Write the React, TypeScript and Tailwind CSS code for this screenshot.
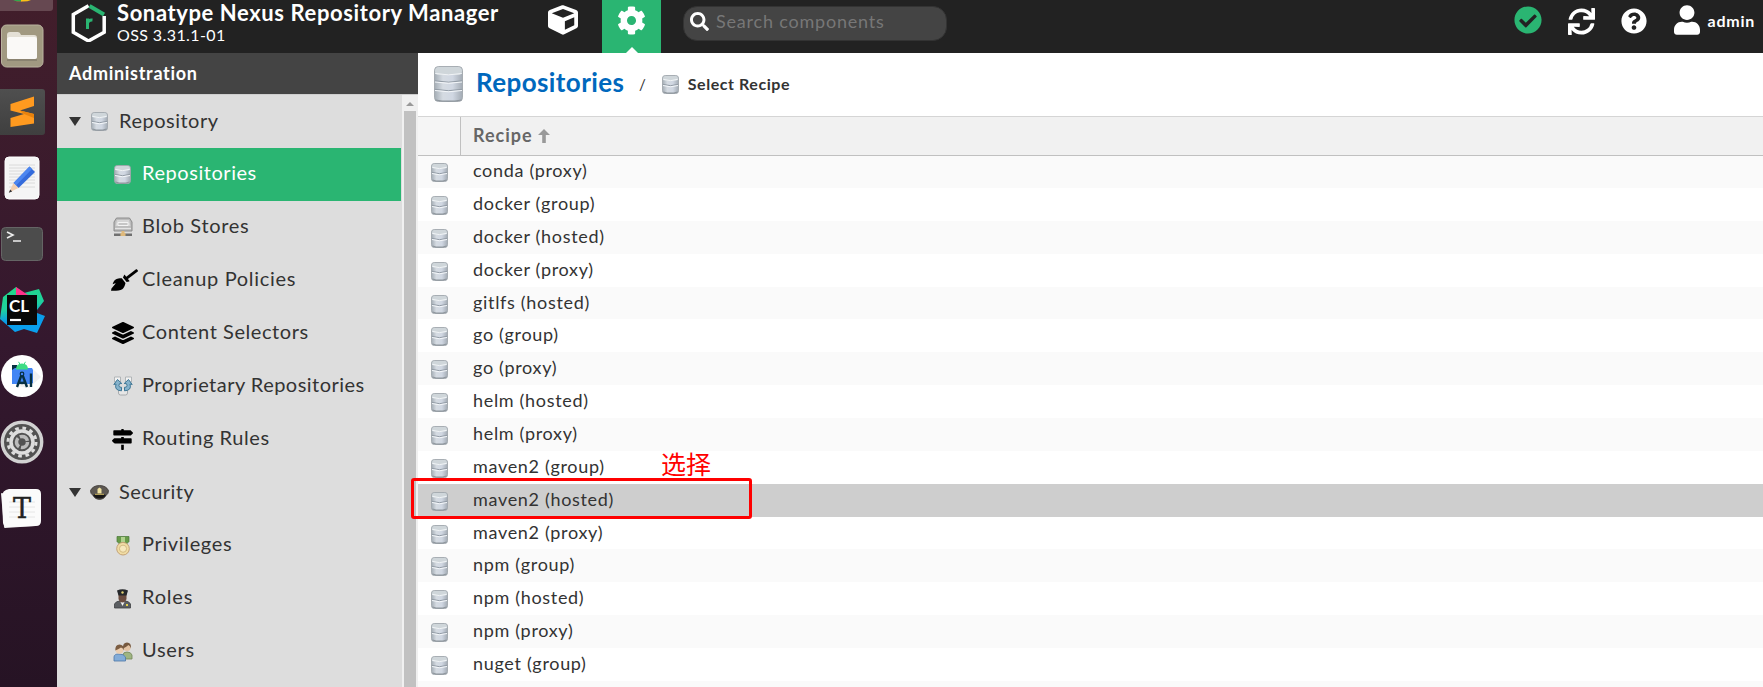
import React, { useId } from "react";
import { FaBroom, FaCheckCircle, FaCog, FaCube, FaLayerGroup, FaMapSigns, FaQuestionCircle, FaSearch, FaSync, FaUser } from "react-icons/fa";

function Database({ className, tiers = 2 }: { className: string; tiers?: number }) {
  const id = useId();
  const big = tiers === 3;
  const h = big ? 36 : 19;
  const w = big ? 29 : 17;
  const lines = big ? [16, 24.5] : [10.5];
  const r = big ? 4 : 2.8;
  const lid = big ? 4 : 2.4;
  return (
    <svg className={`shrink-0 ${className}`} viewBox={`0 0 ${w} ${h}`}>
      <defs>
        <linearGradient id={id} x1="0" x2="1">
          <stop offset="0" stopColor="#a4adb5" />
          <stop offset="0.3" stopColor="#d5dbe2" />
          <stop offset="0.65" stopColor="#d0d7e2" />
          <stop offset="1" stopColor="#a3abb4" />
        </linearGradient>
      </defs>
      <rect x=".5" y=".5" width={w - 1} height={h - 1} rx={r} fill={`url(#${id})`} stroke="#a0a7ad" strokeWidth=".9" />
      <path d={`M1.500 ${h - 2}Q${w / 2} ${h + 0.4} ${w - 1.5} ${h - 2}`} fill="none" stroke="#8d959c" strokeWidth="1.2" />
      <rect x="1" y="1" width={w - 2} height={lid * 2} rx={lid} fill="#cfd6da" />
      <path d={`M1.200 ${lid * 2 - 0.5}Q${w / 2} ${lid * 2 + 2.2} ${w - 1.2} ${lid * 2 - 0.5}`} fill="none" stroke="#f1f4f7" strokeWidth="1" />
      {lines.map((y) => (
        <g key={y} fill="none">
          <path d={`M.8 ${y - 1.2}Q${w / 2} ${y + 1.6} ${w - 0.8} ${y - 1.2}`} stroke="#939ca6" strokeWidth="1" />
          <path d={`M1 ${y}Q${w / 2} ${y + 2.6} ${w - 1} ${y}`} stroke="#f4f7fa" strokeWidth="1" />
        </g>
      ))}
    </svg>
  );
}

const rows = [
  "conda (proxy)", "docker (group)", "docker (hosted)", "docker (proxy)", "gitlfs (hosted)", "go (group)",
  "go (proxy)", "helm (hosted)", "helm (proxy)", "maven2 (group)", "maven2 (hosted)", "maven2 (proxy)",
  "npm (group)", "npm (hosted)", "npm (proxy)", "nuget (group)", "",
];

function Blob() {
  return (
    <svg className="h-5 w-5" viewBox="0 0 20 20">
      <path d="M3.500 1h13L19 5v9H1V5z" fill="#bcbcbc" stroke="#858585" strokeWidth=".9" />
      <path d="M4 3h12l1.500 6h-15z" fill="#d6d6d6" />
      <path d="M5 5.500h10v3H5z" fill="#c6c6c6" stroke="#f7f7f7" strokeWidth=".9" />
      <path d="M2 11.500h16" stroke="#e4e4e4" strokeWidth="1.200" />
      <path d="M1 16.500h18v2.500H1z" fill="#707070" />
      <path d="M8.500 14h3v2h1v3h-5v-3h1z" fill="#dfb97b" />
    </svg>
  );
}
function Proprietary() {
  return (
    <svg className="h-5 w-5" viewBox="0 0 20 20">
      <path d="M1.500 1h6v5h-6zM12.500 1h6v5h-6z" fill="#f2f2f2" stroke="#a5a9ac" strokeWidth=".8" />
      <path d="M5.500 13v4q0 2 2 2h5q2 0 2-2v-4" fill="#e6e6e6" stroke="#a0a5a8" strokeWidth=".9" />
      <path d="M8.500 14.800Q1 14.500 3 8L.8 8.500 4.500 3.500l4.300 4-2.300.2Q4.700 11.300 8.500 11.300zM11.500 14.800Q19 14.500 17 8l2.200.5L15.500 3.500l-4.300 4 2.300.2Q15.300 11.300 11.500 11.300z" fill="#86b3cc" stroke="#3f7796" strokeWidth="1" />
    </svg>
  );
}
function Cap() {
  return (
    <svg className="h-[15px] w-[19px]" viewBox="0 0 19 15">
      <path d="M.5 5.500Q3 .5 9.500.5T18.500 5.500q.3 3-2.500 5-2 4-6.500 4T3 10.500Q.2 8.500 .5 5.500z" fill="#5d5852" stroke="#3b3733" strokeWidth=".8" />
      <path d="M3 10q6-3 13 0-2 3.500-6.500 3.500T3 10z" fill="#181716" />
      <path d="M9.500 2.500l2 1.500v4.500H7.500V4z" fill="#f0e2a0" /><path d="M5 9.300h9" stroke="#d4bd68" />
    </svg>
  );
}
function Medal() {
  return (
    <svg className="h-5 w-5" viewBox="0 0 20 20">
      <path d="M4 .5h12v5l-3 3H7l-3-3z" fill="#679b48" stroke="#477637" strokeWidth=".7" /><path d="M8 1h4v5H8z" fill="#b0d18e" />
      <circle cx="10" cy="12.700" r="6.300" fill="#f0dca4" stroke="#c4a378" /><circle cx="10" cy="12.700" r="3.600" fill="#f6e8bd" stroke="#d3bb83" />
    </svg>
  );
}
function Officer() {
  return (
    <svg className="h-5 w-5" viewBox="0 0 20 20">
      <path d="M1.500 19v-4Q3 12 7 12h5q4 0 5.500 3v4z" fill="#5b5e62" stroke="#3e4043" strokeWidth=".8" /><path d="M7 12h5l-2.500 5z" fill="#f4f4f4" />
      <path d="M5.500 5h8v5q-1 3.500-4 3.500t-4-3.500z" fill="#6b4c3f" /><path d="M4 1.500Q9.500-1 15 1.500l-1.500 5h-8z" fill="#26282b" />
      <circle cx="9.500" cy="3.500" r="1.200" fill="#e0cd71" /><path d="M13 15h2v2h-2z" fill="#e4d04e" />
    </svg>
  );
}
function People() {
  return (
    <svg className="h-5 w-5" viewBox="0 0 20 20">
      <path d="M10 17v-4q0-3 4-3t5 3v4z" fill="#9fb582" stroke="#728759" strokeWidth=".8" /><circle cx="14" cy="5.500" r="3.600" fill="#e3c3a3" /><path d="M10 6.500Q9.500.5 14 .5t4 6Q17.500 4 15.500 3 13 5 10 6.500z" fill="#76593f" />
      <path d="M1 19v-4q0-3 5-3t6.500 3v4z" fill="#83acd8" stroke="#4d77a7" strokeWidth=".8" /><circle cx="6.500" cy="8" r="3.800" fill="#ecceb0" /><path d="M2.300 8.500Q2 2.500 6.500 2.500T11 8.500Q10 6 8 5.500 5 7.500 2.300 8.500z" fill="#7c5d42" />
    </svg>
  );
}

function Group({ icon, label, space }: { icon: React.ReactNode; label: string; space: string }) {
  return (
    <div className="flex h-[53.07px] shrink-0 items-center pb-px pl-3">
      <svg className="h-[9px] w-3" viewBox="0 0 12 9"><path d="M0 0h12L6 9z" fill="#333" /></svg>
      <span className="ml-[6px] flex w-6 justify-center">{icon}</span>
      <span className={`mb-[3px] ml-[8px] whitespace-nowrap ${space}`}>{label}</span>
    </div>
  );
}
function Item({ icon, label, active, space }: { icon: React.ReactNode; label: string; active?: boolean; space: string }) {
  return (
    <div className={`flex h-[53.07px] w-[344px] shrink-0 items-center pb-px pl-[52px] ${active ? "bg-[#2ab572] text-white" : ""}`}>
      <span className="flex w-[27px] justify-center text-black">{icon}</span>
      <span className={`mb-[5px] ml-[6px] whitespace-nowrap ${space}`}>{label}</span>
    </div>
  );
}

function Dock() {
  return (
    <aside className="relative h-full w-[57px] shrink-0 overflow-hidden bg-linear-to-b from-[#421e2b] via-[#34182e] to-[#261324]">
      <svg className="h-[687px] w-[57px]" viewBox="0 0 57 687">
        <defs>
          <linearGradient id="cl" x1="0" y1="0" x2="0.2" y2="1"><stop offset=".1" stopColor="#21d789" /><stop offset=".5" stopColor="#1fd0a0" /><stop offset=".75" stopColor="#0a9be8" /><stop offset="1" stopColor="#0aa0ee" /></linearGradient>
          <linearGradient id="st" x1="0" y1="0" x2="0" y2="1"><stop offset="0" stopColor="#4f4f4f" /><stop offset="1" stopColor="#3f3f3f" /></linearGradient>
        </defs>
        <rect x="-5" y="-10" width="58" height="21" rx="3" fill="#664851" />
        <path d="M14 0h8v1.500h-5z" fill="#e04436" /><path d="M13 0h9l-1 1.600q-5 0-8-1.600z" fill="#2fa84f" /><path d="M21 0h10q-4 2-10 1.500z" fill="#fbc116" />
        <rect x="1.500" y="25" width="41.500" height="42" rx="5" fill="#a19981" stroke="#bab39f" />
        <path d="M7 60h30" stroke="#8a8370" strokeWidth="2" />
        <path d="M7 35q0-3 3-3h8q2 0 3 3h13q3 0 3 3v18q0 3-3 3H10q-3 0-3-3z" fill="#e4e0d6" /><rect x="7" y="37" width="30" height="22" rx="2.500" fill="#faf9f7" />
        <rect x="-3" y="89" width="48" height="46" rx="3" fill="url(#st)" />
        <path d="M10.500 104L34 96.500v9.500l-14 4.500 14 3.500v9.500L10.500 127v-9l13.500-4-13.500-3.500z" fill="#ff9a1f" />
        <path d="M20 110.500l14 3.500v4l-10-4z" fill="#e8820c" />
        <rect x="5" y="157" width="34" height="42" rx="4" fill="#f5f5f5" stroke="#fff" />
        <path d="M9 165h26M9 168h26M9 171h26M9 174h26M9 177h26M9 180h26M9 183h26M9 187h26" stroke="#d3d3d3" strokeWidth=".8" />
        <path d="M29.500 166.500l5.500 5.500-16.500 16-5-5z" fill="#346bdb" /><path d="M29.500 166.500l2.500 2.500-16 16.500-2.500-2.500z" fill="#4c86f0" /><path d="M13.500 183l5 5-9.500 4.500z" fill="#f1ceb0" /><path d="M10.200 189.500l2 2-3.400 1.300z" fill="#333" />
        <rect x="1.500" y="227.500" width="41" height="33" rx="4" fill="#4c4c4c" stroke="#656565" /><path d="M7 232l6 3-6 3M13 241h8" fill="none" stroke="#eee" strokeWidth="1.600" />
        <path d="M3 297l13-10 8 6 15-4 5 12-7 9v3l8 3-8 17-13-4-9 3-15-13z" fill="url(#cl)" /><path d="M16 287l12 8H16z" fill="#ff318c" /><path d="M24 293l-8-2v4h10z" fill="#ff318c" />
        <rect x="7" y="295" width="30" height="30" fill="#080808" /><path d="M10 320h11" stroke="#fff" strokeWidth="2.200" />
        <text x="9" y="311.500" fill="white" fontSize="17" fontWeight="bold" fontFamily="Lato, sans-serif">CL</text>
        <circle cx="22" cy="376" r="21" fill="#fff" /><path d="M33 369l8 8-12 11-12-2z" fill="#f1f1f1" /><path d="M12 365h5v5h-5z" fill="#073042" /><path d="M12 370l3-2h17l1 2v13l-2 1H12z" fill="#4285f4" /><path d="M16 369.500q0-6 6-6t6 6z" fill="#3ddc84" /><path d="M18.500 361.800l1.500 2.500M25.500 361.800L24 364.300" stroke="#3ddc84" />
        <path d="M21.500 375l-4.500 12M22.500 375l4.500 12M18.500 382q3.500 2 7 0M31 373.500v13.500" fill="none" stroke="#073042" strokeWidth="2.400" /><circle cx="22" cy="374" r="1.800" fill="#4285f4" stroke="#073042" strokeWidth="1.200" />
        <circle cx="22" cy="442" r="19.700" fill="#525252" stroke="#d2d2d2" strokeWidth="3.400" /><circle cx="22" cy="442" r="14" fill="none" stroke="#ddd" strokeWidth="3" strokeDasharray="3.660 3.670" /><circle cx="22" cy="442" r="11" fill="none" stroke="#ddd" strokeWidth="3.500" /><circle cx="22" cy="442" r="5.500" fill="none" stroke="#bbb" strokeWidth="3.500" strokeDasharray="9.500 2" />
        <path d="M2 494l3 33 30-2z" fill="#dcdcdc" stroke="#ececec" strokeWidth="2" strokeLinejoin="round" />
        <path d="M2 497q0-7 7-8h27q5 0 5 5v27q0 5-5 5l-28 1q-4 0-5-4z" fill="#fbfbfb" /><path d="M9 502h26M9 507h26M9 512h26M9 517h26" stroke="#e6e6e6" />
        <text x="22" y="518" textAnchor="middle" fill="#222" stroke="#222" strokeWidth=".4" fontSize="27" fontFamily="DejaVu Serif, serif">T</text>
      </svg>
    </aside>
  );
}

export default function App() {
  const db = <Database className="h-[19px] w-[17px]" />;
  return (
    <div className="flex h-[687px] w-[1763px] overflow-hidden bg-white font-['Lato',sans-serif] text-[#333]">
      <Dock />
      <div className="flex min-w-0 flex-1 flex-col">
        <header className="flex h-[53px] shrink-0 bg-[#222] text-white">
          <svg className="mt-1 ml-[14px] h-[38px] w-[36px] shrink-0" viewBox="0 0 36 38">
            <path d="M17.500 1.800L2.300 10.400v17.800l15.200 8.800 15.700-8.800V12" fill="none" stroke="#fff" strokeWidth="3.500" />
            <path d="M18.500 2l14.500 8.500" stroke="#2ab572" strokeWidth="4" />
            <path d="M16.500 25V14.500M16.500 19q1-3.500 5-3" fill="none" stroke="#2ab572" strokeWidth="3" />
          </svg>
          <div className="ml-[10px] flex w-[417px] shrink-0 flex-col whitespace-nowrap">
            <span className="mt-[-1px] text-[22px] leading-[27px] font-bold tracking-[0.6px]">Sonatype Nexus Repository Manager</span>
            <span className="text-[16px] leading-[18px] tracking-[0.4px]">OSS 3.31.1-01</span>
          </div>
          <div className="flex w-[58px] shrink-0 justify-center"><FaCube className="mt-[5px] h-[30px] w-[30px]" /></div>
          <div className="ml-[10px] flex w-[59px] shrink-0 flex-col items-center justify-between bg-[#2ab572]">
            <FaCog className="mt-[6px] h-[29px] w-[29px]" />
            <svg className="h-[6px] w-3" viewBox="0 0 12 6"><path d="M6 0l6 6H0z" fill="#fff" /></svg>
          </div>
          <div className="mt-[6px] ml-[22px] flex h-[35px] w-[264px] shrink-0 items-center rounded-[14px] border border-[#333] bg-[#444] pl-[6px]">
            <FaSearch className="mb-[4px] h-[19px] w-[19px]" />
            <span className="mb-1 ml-[7px] text-[18px] tracking-[0.8px] text-[#777]">Search components</span>
          </div>
          <div className="ml-auto flex pr-[8px]">
            <FaCheckCircle className="mt-[6px] h-7 w-7 text-[#2ab572]" />
            <FaSync className="mt-2 ml-[26px] h-[27px] w-[27px]" />
            <FaQuestionCircle className="mt-2 ml-[26px] h-[26px] w-[26px]" />
            <FaUser className="mt-[5px] ml-[27px] h-[30px] w-[26px]" />
            <span className="mt-[9px] ml-2 text-[16px] leading-6 font-bold tracking-[0.75px]">admin</span>
          </div>
        </header>
        <div className="flex min-h-0 flex-1">
          <nav className="flex w-[361px] shrink-0 flex-col">
            <div className="flex h-[41px] shrink-0 items-center bg-[#444] pl-3 text-[18px] font-bold tracking-[0.7px] text-white">Administration</div>
            <div className="flex min-h-0 flex-1 border-t border-[#cecece] bg-[#ddd]">
              <div className="flex w-[345px] flex-col overflow-hidden text-[20px]">
                <Group icon={db} label="Repository" space="tracking-[0.5px]" />
                <Item icon={db} label="Repositories" active space="tracking-[0.55px]" />
                <Item icon={<Blob />} label="Blob Stores" space="tracking-[0.65px]" />
                <Item icon={<FaBroom className="h-[22px] w-[27px] translate-x-[2px]" />} label="Cleanup Policies" space="tracking-[0.68px]" />
                <Item icon={<FaLayerGroup className="h-[22px] w-[22px]" />} label="Content Selectors" space="tracking-[0.57px]" />
                <Item icon={<Proprietary />} label="Proprietary Repositories" space="tracking-[0.47px]" />
                <Item icon={<FaMapSigns className="h-[21px] w-[21px]" />} label="Routing Rules" space="tracking-[0.57px]" />
                <Group icon={<Cap />} label="Security" space="tracking-[0.45px]" />
                <Item icon={<Medal />} label="Privileges" space="tracking-[0.65px]" />
                <Item icon={<Officer />} label="Roles" space="tracking-[0.8px]" />
                <Item icon={<People />} label="Users" space="tracking-[0.7px]" />
              </div>
              <div className="flex w-4 flex-col items-center bg-[#f0f0f0]">
                <svg className="mt-[7px] h-1 w-2" viewBox="0 0 8 4"><path d="M4 0l4 4H0z" fill="#999" /></svg>
                <div className="mt-[5px] w-3 flex-1 bg-[#c1c1c1]" />
              </div>
            </div>
          </nav>
          <main className="relative flex min-w-0 flex-1 flex-col">
            <div className="flex h-[63px] shrink-0 items-center pl-[16px]">
              <Database tiers={3} className="mb-[2px] h-[36px] w-[29px]" />
              <span className="mb-[5px] ml-[13px] w-[148px] text-[26px] font-bold tracking-[0.4px] whitespace-nowrap text-[#0068bd]">Repositories</span>
              <span className="ml-[15px] text-[15px]">/</span>
              <Database className="ml-[16px] h-[19px] w-[17px]" />
              <span className="mb-px ml-[9px] text-[16px] font-bold tracking-[0.55px]">Select Recipe</span>
            </div>
            <div className="flex h-10 shrink-0 border-t border-b border-t-[#d5d5d5] border-b-[#c0c0c0] bg-[#f1f1f1]">
              <div className="w-[43px] border-r border-[#c0c0c0] bg-[#f5f5f5]" />
              <div className="flex items-center pl-3 text-[18px] font-bold text-[#666]">
                <span className="mb-[2px] tracking-[1px]">Recipe</span>
                <svg className="mb-px ml-[5px] h-[14px] w-[12px]" viewBox="0 0 12 14"><path d="M6 0L12 6H7.800V14H4.200V6H0z" fill="#999" /></svg>
              </div>
            </div>
            <div className="flex min-h-0 flex-1 flex-col overflow-hidden text-[18px] tracking-[0.68px]">
              {rows.map((label, i) => (
                <div key={i} className={`flex shrink-0 items-center pl-[13px] ${i === 0 ? "h-8 pb-px" : "h-[32.87px]"} ${i === 10 ? "bg-[#cecece]" : i % 2 ? "bg-white" : "bg-[#fafafa]"}`}>
                  <Database className="mt-[2px] h-[19px] w-[17px]" />
                  <span className="mb-[2px] ml-[25px] whitespace-nowrap">{label}</span>
                </div>
              ))}
            </div>
            <div className="absolute top-[425px] -left-[7px] h-[41px] w-[341px] rounded-[3px] border-3 border-[#f00]" />
            <span className="absolute top-[392px] left-[243px] font-['Noto_Sans_CJK_SC',sans-serif] text-[25px] leading-[36px] text-[#f00]">选择</span>
          </main>
        </div>
      </div>
    </div>
  );
}
